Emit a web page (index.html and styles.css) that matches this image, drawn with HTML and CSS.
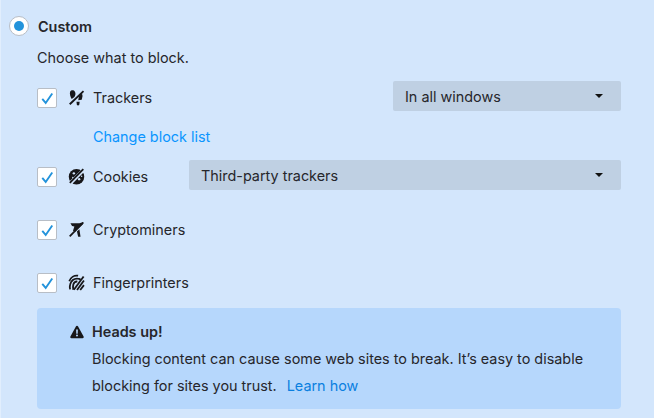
FILE: index.html
```html
<!DOCTYPE html>
<html lang="en">
<head>
  <meta charset="UTF-8" />
  <title>Custom blocking</title>
  <link rel="stylesheet" href="styles.css">
</head>
<body>
  <div class="panel">
    <div class="heading">
      <span class="radio"><span class="radio-dot"></span></span>
      <strong>Custom</strong>
    </div>
    <p class="intro">Choose what to block.</p>

    <div class="row row-trackers">
      <span class="check"><svg viewBox="0 0 20 20"><path d="M4.500 10.500l3.600 4.200L15 4.800"/></svg></span>
      <svg class="icon" viewBox="0 0 16 16"><path d="M2 2.500C3 .8 5.500.8 6.500 2.500c1 1.700.5 3.500-.5 5L3.500 9.500C2.500 7.500 1.200 4.500 2 2.500z"/><path d="M14 1.500l1.200 1.200L2.300 15 1 13.700z"/><path d="M10.300 6.800l2.900-2.500.5 2.200-.8 3.500-3.300.5z"/><path d="M8 12h3l-.4 2.800a1.300 1.300 0 0 1-2.300 0z"/></svg>
      <span class="label">Trackers</span>
      <div class="select select-short"><span>In all windows</span><i class="arrow"></i></div>
    </div>
    <a class="block-list" href="#">Change block list</a>

    <div class="row row-cookies">
      <span class="check"><svg viewBox="0 0 20 20"><path d="M4.500 10.500l3.600 4.200L15 4.800"/></svg></span>
      <svg class="icon icon-cookie" viewBox="0 0 16 16"><circle cx="8" cy="8.300" r="7.300"/><path class="cut" d="M15.500 1L2.500 14"/><circle class="hole" cx="5.500" cy="5" r="1.100"/><circle class="hole" cx="10.500" cy="10.500" r="1.100"/><circle class="hole" cx="4.500" cy="9" r=".7"/><circle class="hole" cx="12.800" cy="7.800" r=".7"/><path d="M13.800.5l1.200 1.200L2.300 14.500 1.100 13.300z"/></svg>
      <span class="label">Cookies</span>
      <div class="select select-long"><span>Third-party trackers</span><i class="arrow"></i></div>
    </div>

    <div class="row row-miners">
      <span class="check"><svg viewBox="0 0 20 20"><path d="M4.500 10.500l3.600 4.200L15 4.800"/></svg></span>
      <svg class="icon" viewBox="0 0 16 16"><path d="M2.300 2h8.400l4-1-1 2.200-3 3L6.700 10 4.700 9.200 6 5.200 3.800 4.700z"/><path d="M13.700 1l1.200 1.200L2.200 15 1 13.800z"/><path d="M8.400 9.800l2.300-2L11.800 14.800H9.600z"/></svg>
      <span class="label">Cryptominers</span>
    </div>

    <div class="row row-prints">
      <span class="check"><svg viewBox="0 0 20 20"><path d="M4.500 10.500l3.600 4.200L15 4.800"/></svg></span>
      <svg class="icon icon-lines" viewBox="0 0 16 16"><path d="M1.200 6.800C2.600 3 6 1 9.500 1.600"/><path d="M2 14.500c-.4-1.700-.4-3.300 0-4.700C2.800 6.500 5.700 4 9 4.300c1.100 0 2.100.4 3 1"/><path d="M5 14.800c-.4-1.700-.4-3.400 0-4.900.6-1.800 2.100-3 3.800-2.800"/><path d="M14.700 2.300L5.500 14.800"/><path d="M15 6.200L8.500 15"/><path d="M15 10.500L11.500 15"/></svg>
      <span class="label">Fingerprinters</span>
    </div>

    <div class="alert">
      <svg class="alert-icon" viewBox="0 0 14 14"><path fill-rule="evenodd" d="M7 .8c.5 0 .9.3 1.100.7l5.500 10c.4.800-.1 1.700-1 1.700H1.400c-.9 0-1.400-.9-1-1.700l5.500-10C6.100 1.100 6.500.8 7 .8zM6.100 4.500l.2 4.300h1.400l.2-4.300zM7 9.600a1 1 0 1 0 0 2 1 1 0 0 0 0-2z"/></svg>
      <div class="alert-body">
        <strong>Heads up!</strong>
        <p>Blocking content can cause some web sites to break. It’s easy to disable</p>
        <p>blocking for sites you trust. <a href="#">Learn how</a></p>
      </div>
    </div>
  </div>
</body>
</html>
```

FILE: styles.css
```css
html, body {
  margin: 0;
  height: 100%;
}

body {
  background-color: #d3e6fc;
  color: #26262b;
  font-family: Inter, 'Liberation Sans', sans-serif;
  font-size: 14.400px;
  overflow: hidden;
}

.panel {
  height: 100%;
  box-sizing: border-box;
  padding: 16px 33px 0 8px;
  border-left: 1px solid #e1eefd;
}

.heading {
  display: flex;
  align-items: center;
  height: 20px;
  gap: 9px;
}

.heading strong {
  font-weight: 600;
}

.radio {
  width: 20px;
  height: 20px;
  box-sizing: border-box;
  border: 1.500px solid #b8bec6;
  border-radius: 50%;
  background: white;
  display: flex;
  align-items: center;
  justify-content: center;
}

.radio-dot {
  width: 10px;
  height: 10px;
  border-radius: 50%;
  background: #2393db;
}

.intro {
  margin: 13px 0 0 28px;
  line-height: 18px;
  height: 18px;
}

.row {
  display: flex;
  align-items: center;
  height: 30px;
  margin-left: 28px;
}

.row-trackers {
  margin-top: 14px;
}

.row-cookies {
  margin-top: 13px;
}

.row-miners {
  margin-top: 23px;
}

.row-prints {
  margin-top: 23px;
}

.check {
  width: 20px;
  height: 20px;
  flex: none;
  box-sizing: border-box;
  border: 1.500px solid #b8bec6;
  border-radius: 2px;
  background: white;
  display: flex;
  align-items: center;
  justify-content: center;
  position: relative;
  top: 2px;
}

.check svg {
  display: block;
  width: 19px;
  height: 19px;
  flex: none;
  fill: none;
  stroke: #2393db;
  stroke-width: 2;
}

.icon {
  width: 17px;
  height: 17px;
  flex: none;
  margin-left: 11px;
  fill: #17171a;
  position: relative;
  top: 1px;
}

.icon-lines {
  fill: none;
  stroke: #17171a;
  stroke-width: 1.700;
}

.icon-cookie .cut {
  fill: none;
  stroke: #d3e6fc;
  stroke-width: 3.400;
}

.icon-cookie .hole {
  fill: #d3e6fc;
}

.label {
  margin-left: 8px;
  position: relative;
  top: 1px;
}

.select {
  background: #bfd0e3;
  border-radius: 2px;
  height: 30px;
  display: flex;
  align-items: center;
  justify-content: space-between;
  box-sizing: border-box;
  padding: 0 18px 0 12px;
}

.select-short {
  width: 228px;
  margin-left: auto;
}

.select-long {
  width: 432px;
  margin-left: auto;
}

.arrow {
  width: 0;
  height: 0;
  border-left: 4.500px solid transparent;
  border-right: 4.500px solid transparent;
  border-top: 4px solid #111;
}

.block-list {
  display: block;
  margin: 16px 0 0 84px;
  line-height: 20px;
  height: 20px;
  color: #0a95ff;
  text-decoration: none;
}

.alert {
  display: flex;
  margin: 12px 0 0 28px;
  height: 101px;
  box-sizing: border-box;
  padding: 14px 12px 0 33px;
  background: #b6d7fc;
  border-radius: 4px;
}

.alert-icon {
  width: 14px;
  height: 14px;
  flex: none;
  margin-top: 3px;
  fill: #17171a;
}

.alert-body {
  margin-left: 8px;
  line-height: 20px;
}

.alert-body strong {
  display: block;
  font-weight: 600;
}

.alert-body p {
  margin: 7px 0 0;
}

.alert-body a {
  color: #0a7fe0;
  text-decoration: none;
  margin-left: 6px;
}
```
